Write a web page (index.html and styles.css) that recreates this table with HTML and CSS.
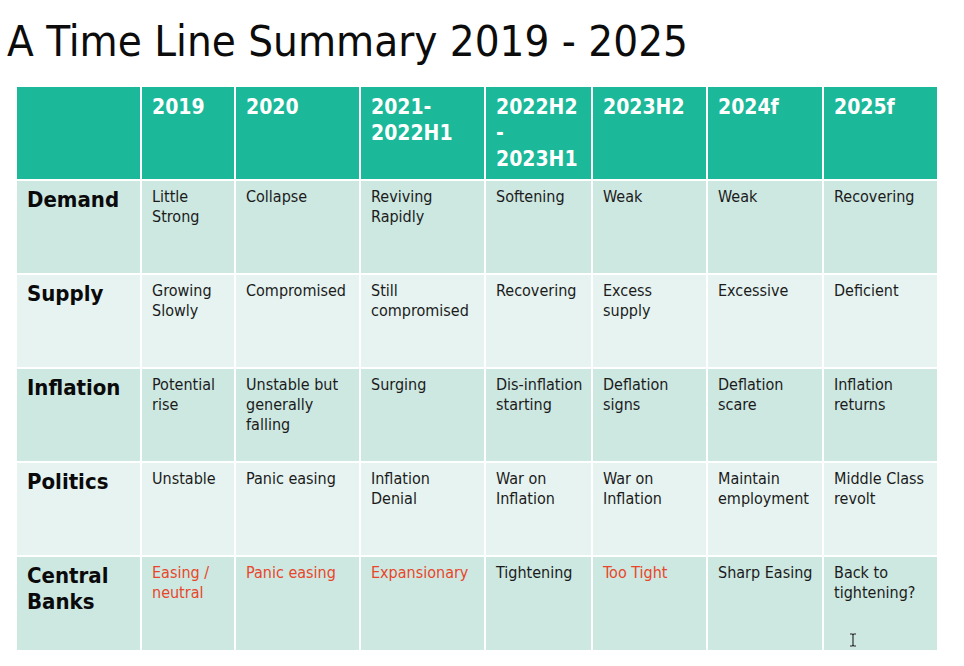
FILE: index.html
```html
<!DOCTYPE html>
<html lang="en">
<head>
<meta charset="utf-8">
<title>A Time Line Summary 2019 - 2025</title>
<link rel="stylesheet" href="styles.css">
</head>
<body>
<main class="slide">
  <h1 class="title">A Time Line Summary 2019 - 2025</h1>
  <div class="timeline">
    <div class="cell head"></div>
    <div class="cell head">2019</div>
    <div class="cell head">2020</div>
    <div class="cell head">2021-<br>2022H1</div>
    <div class="cell head">2022H2<br>-<br>2023H1</div>
    <div class="cell head">2023H2</div>
    <div class="cell head">2024f</div>
    <div class="cell head">2025f</div>

    <div class="cell label odd">Demand</div>
    <div class="cell odd">Little<br>Strong</div>
    <div class="cell odd">Collapse</div>
    <div class="cell odd">Reviving<br>Rapidly</div>
    <div class="cell odd">Softening</div>
    <div class="cell odd">Weak</div>
    <div class="cell odd">Weak</div>
    <div class="cell odd">Recovering</div>

    <div class="cell label even">Supply</div>
    <div class="cell even">Growing<br>Slowly</div>
    <div class="cell even">Compromised</div>
    <div class="cell even">Still<br>compromised</div>
    <div class="cell even">Recovering</div>
    <div class="cell even">Excess<br>supply</div>
    <div class="cell even">Excessive</div>
    <div class="cell even">Deficient</div>

    <div class="cell label odd">Inflation</div>
    <div class="cell odd">Potential<br>rise</div>
    <div class="cell odd">Unstable but<br>generally<br>falling</div>
    <div class="cell odd">Surging</div>
    <div class="cell odd">Dis-inflation<br>starting</div>
    <div class="cell odd">Deflation<br>signs</div>
    <div class="cell odd">Deflation<br>scare</div>
    <div class="cell odd">Inflation<br>returns</div>

    <div class="cell label even">Politics</div>
    <div class="cell even">Unstable</div>
    <div class="cell even">Panic easing</div>
    <div class="cell even">Inflation<br>Denial</div>
    <div class="cell even">War on<br>Inflation</div>
    <div class="cell even">War on<br>Inflation</div>
    <div class="cell even">Maintain<br>employment</div>
    <div class="cell even">Middle Class<br>revolt</div>

    <div class="cell label odd">Central<br>Banks</div>
    <div class="cell odd alert">Easing /<br>neutral</div>
    <div class="cell odd alert">Panic easing</div>
    <div class="cell odd alert">Expansionary</div>
    <div class="cell odd">Tightening</div>
    <div class="cell odd alert">Too Tight</div>
    <div class="cell odd">Sharp Easing</div>
    <div class="cell odd cursor-host">Back to<br>tightening?
      <svg class="ibeam" width="8" height="14" viewBox="0 0 8 14" aria-hidden="true">
        <path d="M1 1h2.2L4 2l.8-1H7M4 2v10M1 13h2.2L4 12l.8 1H7" fill="none" stroke="#222" stroke-width="1.1"/>
      </svg>
    </div>
  </div>
</main>
</body>
</html>
```
FILE: styles.css
```css
html, body {
  margin: 0;
  padding: 0;
  background: #ffffff;
}

.slide {
  width: 964px;
  height: 666px;
  overflow: hidden;
  font-family: "DejaVu Sans Condensed", "DejaVu Sans", sans-serif;
  font-stretch: condensed;
  color: #1b1b1b;
}

.title {
  margin: 16px 0 0 7px;
  font-size: 43.5px;
  line-height: 50px;
  font-weight: normal;
  color: #0c0c0c;
  white-space: nowrap;
}

.timeline {
  margin: 21px 0 0 17px;
  width: 920px;
  display: grid;
  grid-template-columns: 123px 92px 123px 123px 105px 113px 114px 113px;
  grid-template-rows: 92px 92px 92px 92px 92px 93px;
  gap: 2px;
  background: #ffffff;
}

.cell {
  padding: 6px 4px 0 10px;
  font-size: 16px;
  line-height: 20px;
  white-space: nowrap;
}

.head {
  background: #1bb899;
  color: #ffffff;
  font-weight: bold;
  font-size: 21px;
  line-height: 26px;
  padding-top: 7px;
}

.label {
  font-weight: bold;
  font-size: 22px;
  line-height: 26px;
  color: #0a0a0a;
}

.odd {
  background: #cde7e1;
}

.even {
  background: #e6f3f0;
}

.alert {
  color: #e8462a;
}

.cursor-host {
  position: relative;
}

.ibeam {
  position: absolute;
  left: 25px;
  top: 76px;
}
```
